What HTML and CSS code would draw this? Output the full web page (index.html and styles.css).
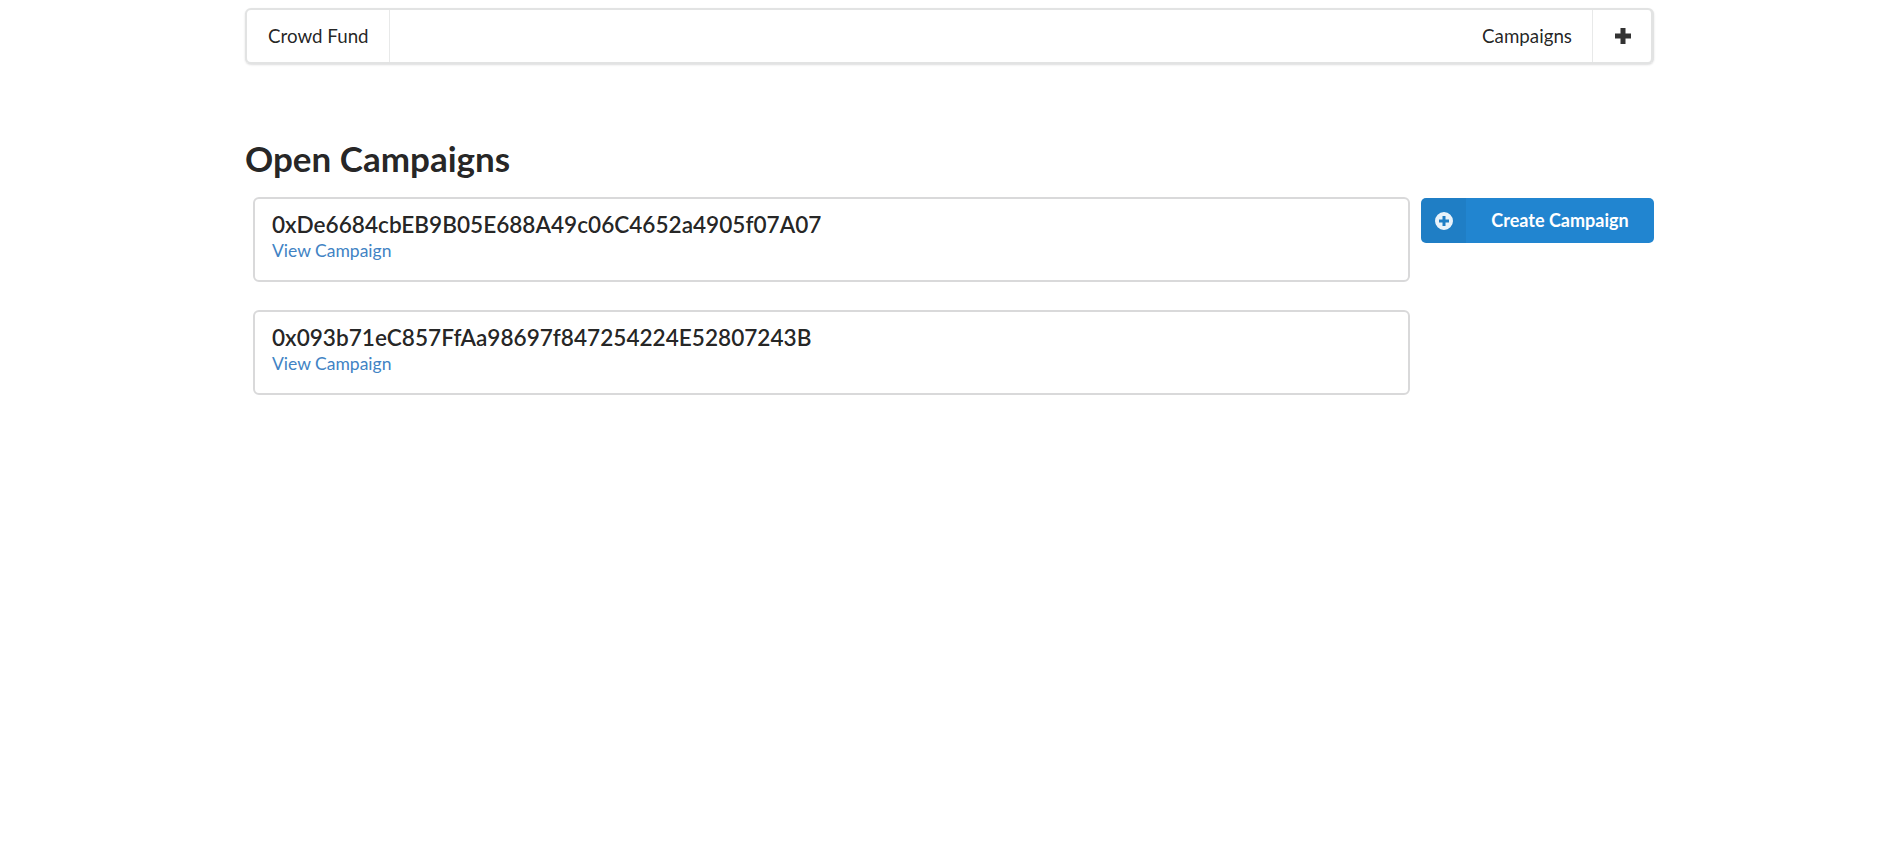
FILE: index.html
```html
<!DOCTYPE html>
<html lang="en">
<head>
    <meta charset="UTF-8">
    <title>Crowd Fund</title>
    <link rel="stylesheet" href="styles.css">
</head>

<body>
    <div class="container">
        <nav class="menu">
            <a class="menu-item" href="#">Crowd Fund</a>
            <div class="menu-right">
                <a class="menu-item" href="#">Campaigns</a>
                <a class="menu-item menu-plus" href="#" aria-label="Add">
                    <svg width="18" height="18" viewBox="0 0 18 18">
                        <path d="M6.500 1h5v5.500h5.500v5h-5.500v5.500h-5v-5.500H1v-5h5.500z" fill="#333" />
                    </svg>
                </a>
            </div>
        </nav>

        <h1>Open Campaigns</h1>

        <div class="content">
            <div class="cards">
                <div class="card">
                    <div class="card-title">0xDe6684cbEB9B05E688A49c06C4652a4905f07A07</div>
                    <a class="card-link" href="#">View Campaign</a>
                </div>
                <div class="card">
                    <div class="card-title">0x093b71eC857FfAa98697f847254224E52807243B</div>
                    <a class="card-link" href="#">View Campaign</a>
                </div>
            </div>

            <a class="button" href="#">
                <span class="button-icon">
                    <svg width="18" height="18" viewBox="0 0 18 18">
                        <path fill-rule="evenodd" d="M9 0a9 9 0 1 1 0 18A9 9 0 0 1 9 0zM7.500 4v3.500H4v3h3.500V14h3v-3.500H14v-3h-3.500V4z" fill="#e8f2fa" />
                    </svg>
                </span>
                <span class="button-text">Create Campaign</span>
            </a>
        </div>
    </div>
</body>
</html>
```

FILE: styles.css
```css
body {
    font-family: 'Lato', 'Liberation Sans', sans-serif;
    font-size: 17.5px;
    line-height: 1.4285;
    color: rgba(0, 0, 0, 0.87);
    background: #fff;
    margin: 0;
    padding-left: 8px;
}

a {
    text-decoration: none;
}

.container {
    width: 1409px;
    margin: 0 auto;
    padding-top: 8px;
}

.menu {
    display: flex;
    justify-content: space-between;
    height: 56px;
    box-sizing: border-box;
    border: 2px solid rgba(34, 36, 38, 0.13);
    border-right-width: 3px;
    border-radius: 6px;
    box-shadow: 0 1px 2px rgba(34, 36, 38, 0.15);
}

.menu-right {
    display: flex;
}

.menu-item {
    display: flex;
    align-items: center;
    padding: 0 20px 0 21px;
    font-size: 18.75px;
    color: rgba(0, 0, 0, 0.87);
    border-right: 1px solid rgba(34, 36, 38, 0.1);
}

.menu-right .menu-item {
    border-right: none;
    padding-right: 20px;
}

.menu-right .menu-plus {
    border-left: 1px solid rgba(34, 36, 38, 0.1);
    padding: 0 19px 0 21px;
}

h1 {
    font-size: 35px;
    font-weight: 700;
    line-height: 42px;
    color: rgba(0, 0, 0, 0.87);
    margin: 73px 0 18px;
}

.content {
    display: flex;
    align-items: flex-start;
    justify-content: space-between;
}

.cards {
    display: flex;
    flex-direction: column;
    gap: 28px;
    width: 1157px;
    margin-left: 8px;
}

.card {
    height: 85px;
    box-sizing: border-box;
    padding: 12px 17px;
    border: 2px solid #d9d9da;
    border-radius: 6px;
}

.card-title {
    font-size: 22.6px;
    font-weight: 600;
    line-height: 28px;
}

.card-link {
    display: block;
    color: #4183c4;
    line-height: 24px;
}

.button {
    display: flex;
    align-items: center;
    width: 233px;
    height: 45px;
    margin-top: 1px;
    background: #2185d0;
    color: #fff;
    font-size: 18px;
    font-weight: 700;
    border-radius: 5px;
    overflow: hidden;
}

.button-icon {
    display: flex;
    align-items: center;
    justify-content: center;
    width: 45px;
    height: 100%;
    background: rgba(0, 0, 0, 0.05);
}

.button-text {
    flex: 1;
    text-align: center;
}
```
